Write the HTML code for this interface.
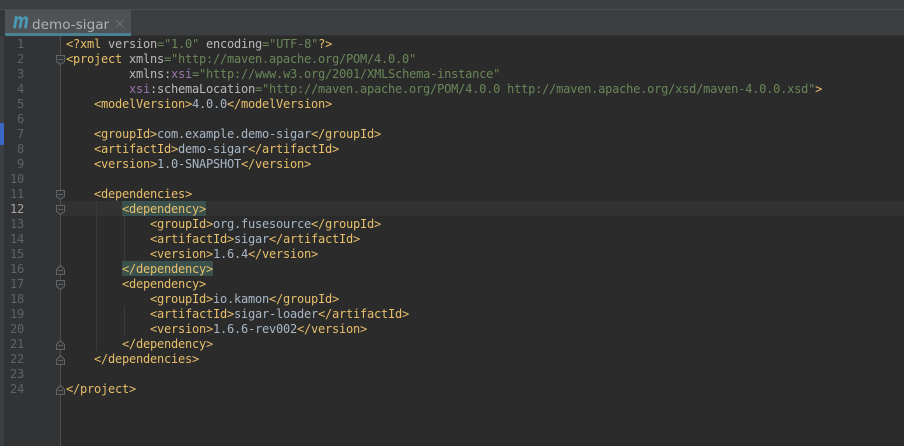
<!DOCTYPE html>
<html>
<head>
<meta charset="utf-8">
<style>
html,body{margin:0;padding:0;background:#2b2b2b;}
#r{position:relative;width:904px;height:446px;overflow:hidden;background:#2b2b2b;font-family:"DejaVu Sans Mono","Liberation Mono",monospace;}
#r div{position:absolute;}
#r .l{left:66px;margin-top:1px;height:15px;line-height:15px;font-size:12px;letter-spacing:-0.224px;white-space:pre;color:#a9b7c6;}
#r .n{left:4px;margin-top:1px;width:20px;height:15px;line-height:15px;font-size:12px;letter-spacing:-0.224px;text-align:right;color:#606366;}
b{font-weight:normal;}
.t{color:#e8bf6a;}
.a{color:#bababa;}
.s{color:#6a8759;}
.x{color:#9876aa;}
</style>
</head>
<body>
<div id="r">
<div style="left:0;top:0;width:904px;height:36px;background:#3c3f41"></div>
<div style="left:0;top:9px;width:904px;height:1px;background:#4b4d4f"></div>
<div style="left:0;top:10px;width:5px;height:26px;background:#33383d"></div>
<div style="left:5px;top:10px;width:126px;height:23px;background:#4e5254"></div>
<div style="left:5px;top:33px;width:126px;height:3px;background:#4a8191"></div>
<div style="left:131px;top:35px;width:773px;height:1px;background:#323232"></div>
<div style="left:13px;top:11px;font:italic bold 21px/22px 'Liberation Sans',sans-serif;color:#4a9ab5;-webkit-text-stroke:.4px #4a9ab5;transform:scaleX(.84);transform-origin:left top">m</div>
<div style="left:32px;top:15px;font:13.6px/20px 'DejaVu Sans',sans-serif;color:#afb1b3;white-space:pre">demo-sigar</div>
<svg style="position:absolute;left:115px;top:19px" width="10" height="10" fill="none" stroke="#6b6e70" stroke-width="1"><path d="M1 1L8.500 8.500M8.500 1L1 8.500"/></svg>

<div style="left:0;top:36px;width:4px;height:410px;background:#3c3f41"></div>
<div style="left:0;top:123px;width:4px;height:22px;background:#3a68c4"></div>
<div style="left:4px;top:36px;width:56px;height:410px;background:#313335"></div>
<div style="left:60px;top:36px;width:1px;height:410px;background:#4d4e50"></div>
<div style="left:61px;top:201px;width:843px;height:15px;background:#323232"></div>
<div style="left:96px;top:201px;width:1px;height:150px;background:#3b3b3b"></div>
<div style="left:124px;top:216px;width:1px;height:45px;background:#3b3b3b"></div>
<div style="left:124px;top:306px;width:1px;height:30px;background:#3b3b3b"></div>
<div style="left:122px;top:201px;width:84px;height:15px;background:#3b514d"></div>
<div style="left:122px;top:261px;width:91px;height:15px;background:#3b514d"></div>

<div class="n" style="top:36px">1</div>
<div class="n" style="top:51px">2</div>
<div class="n" style="top:66px">3</div>
<div class="n" style="top:81px">4</div>
<div class="n" style="top:96px">5</div>
<div class="n" style="top:111px">6</div>
<div class="n" style="top:126px">7</div>
<div class="n" style="top:141px">8</div>
<div class="n" style="top:156px">9</div>
<div class="n" style="top:171px">10</div>
<div class="n" style="top:186px">11</div>
<div class="n" style="top:201px;color:#a4a3a3">12</div>
<div class="n" style="top:216px">13</div>
<div class="n" style="top:231px">14</div>
<div class="n" style="top:246px">15</div>
<div class="n" style="top:261px">16</div>
<div class="n" style="top:276px">17</div>
<div class="n" style="top:291px">18</div>
<div class="n" style="top:306px">19</div>
<div class="n" style="top:321px">20</div>
<div class="n" style="top:336px">21</div>
<div class="n" style="top:351px">22</div>
<div class="n" style="top:366px">23</div>
<div class="n" style="top:381px">24</div>

<div class="l" style="top:36px"><b class="t">&lt;?xml </b><b class="a">version</b><b class="s">="1.0" </b><b class="a">encoding</b><b class="s">="UTF-8"</b><b class="t">?&gt;</b></div>
<div class="l" style="top:51px"><b class="t">&lt;project </b><b class="a">xmlns</b><b class="s">="http://maven.apache.org/POM/4.0.0"</b></div>
<div class="l" style="top:66px">         <b class="a">xmlns:</b><b class="x">xsi</b><b class="s">="http://www.w3.org/2001/XMLSchema-instance"</b></div>
<div class="l" style="top:81px">         <b class="x">xsi</b><b class="a">:schemaLocation</b><b class="s">="http://maven.apache.org/POM/4.0.0 http://maven.apache.org/xsd/maven-4.0.0.xsd"</b><b class="t">&gt;</b></div>
<div class="l" style="top:96px">    <b class="t">&lt;modelVersion&gt;</b>4.0.0<b class="t">&lt;/modelVersion&gt;</b></div>
<div class="l" style="top:126px">    <b class="t">&lt;groupId&gt;</b>com.example.demo-sigar<b class="t">&lt;/groupId&gt;</b></div>
<div class="l" style="top:141px">    <b class="t">&lt;artifactId&gt;</b>demo-sigar<b class="t">&lt;/artifactId&gt;</b></div>
<div class="l" style="top:156px">    <b class="t">&lt;version&gt;</b>1.0-SNAPSHOT<b class="t">&lt;/version&gt;</b></div>
<div class="l" style="top:186px">    <b class="t">&lt;dependencies&gt;</b></div>
<div class="l" style="top:201px">        <b class="t">&lt;dependency&gt;</b></div>
<div class="l" style="top:216px">            <b class="t">&lt;groupId&gt;</b>org.fusesource<b class="t">&lt;/groupId&gt;</b></div>
<div class="l" style="top:231px">            <b class="t">&lt;artifactId&gt;</b>sigar<b class="t">&lt;/artifactId&gt;</b></div>
<div class="l" style="top:246px">            <b class="t">&lt;version&gt;</b>1.6.4<b class="t">&lt;/version&gt;</b></div>
<div class="l" style="top:261px">        <b class="t">&lt;/dependency&gt;</b></div>
<div class="l" style="top:276px">        <b class="t">&lt;dependency&gt;</b></div>
<div class="l" style="top:291px">            <b class="t">&lt;groupId&gt;</b>io.kamon<b class="t">&lt;/groupId&gt;</b></div>
<div class="l" style="top:306px">            <b class="t">&lt;artifactId&gt;</b>sigar-loader<b class="t">&lt;/artifactId&gt;</b></div>
<div class="l" style="top:321px">            <b class="t">&lt;version&gt;</b>1.6.6-rev002<b class="t">&lt;/version&gt;</b></div>
<div class="l" style="top:336px">        <b class="t">&lt;/dependency&gt;</b></div>
<div class="l" style="top:351px">    <b class="t">&lt;/dependencies&gt;</b></div>
<div class="l" style="top:381px"><b class="t">&lt;/project&gt;</b></div>

<svg style="position:absolute;left:0;top:0" width="904" height="446" fill="#313335" stroke="#626365" stroke-width="1" shape-rendering="crispEdges">
<g>
<path d="M56.500 55.500H64.500V61.500L60.500 64.500L56.500 61.500Z"/><path d="M58 59.500H63"/>
<path d="M56.500 190.500H64.500V196.500L60.500 199.500L56.500 196.500Z"/><path d="M58 194.500H63"/>
<path d="M56.500 205.500H64.500V211.500L60.500 214.500L56.500 211.500Z"/><path d="M58 209.500H63"/>
<path d="M56.500 280.500H64.500V286.500L60.500 289.500L56.500 286.500Z"/><path d="M58 284.500H63"/>
</g>
<g>
<path d="M56.500 269.500L60.500 265.500L64.500 269.500V274.500H56.500Z"/><path d="M58 270.500H63"/>
<path d="M56.500 344.500L60.500 340.500L64.500 344.500V349.500H56.500Z"/><path d="M58 345.500H63"/>
<path d="M56.500 359.500L60.500 355.500L64.500 359.500V364.500H56.500Z"/><path d="M58 360.500H63"/>
<path d="M56.500 389.500L60.500 385.500L64.500 389.500V394.500H56.500Z"/><path d="M58 390.500H63"/>
</g>
</svg>
</div>
</body>
</html>
